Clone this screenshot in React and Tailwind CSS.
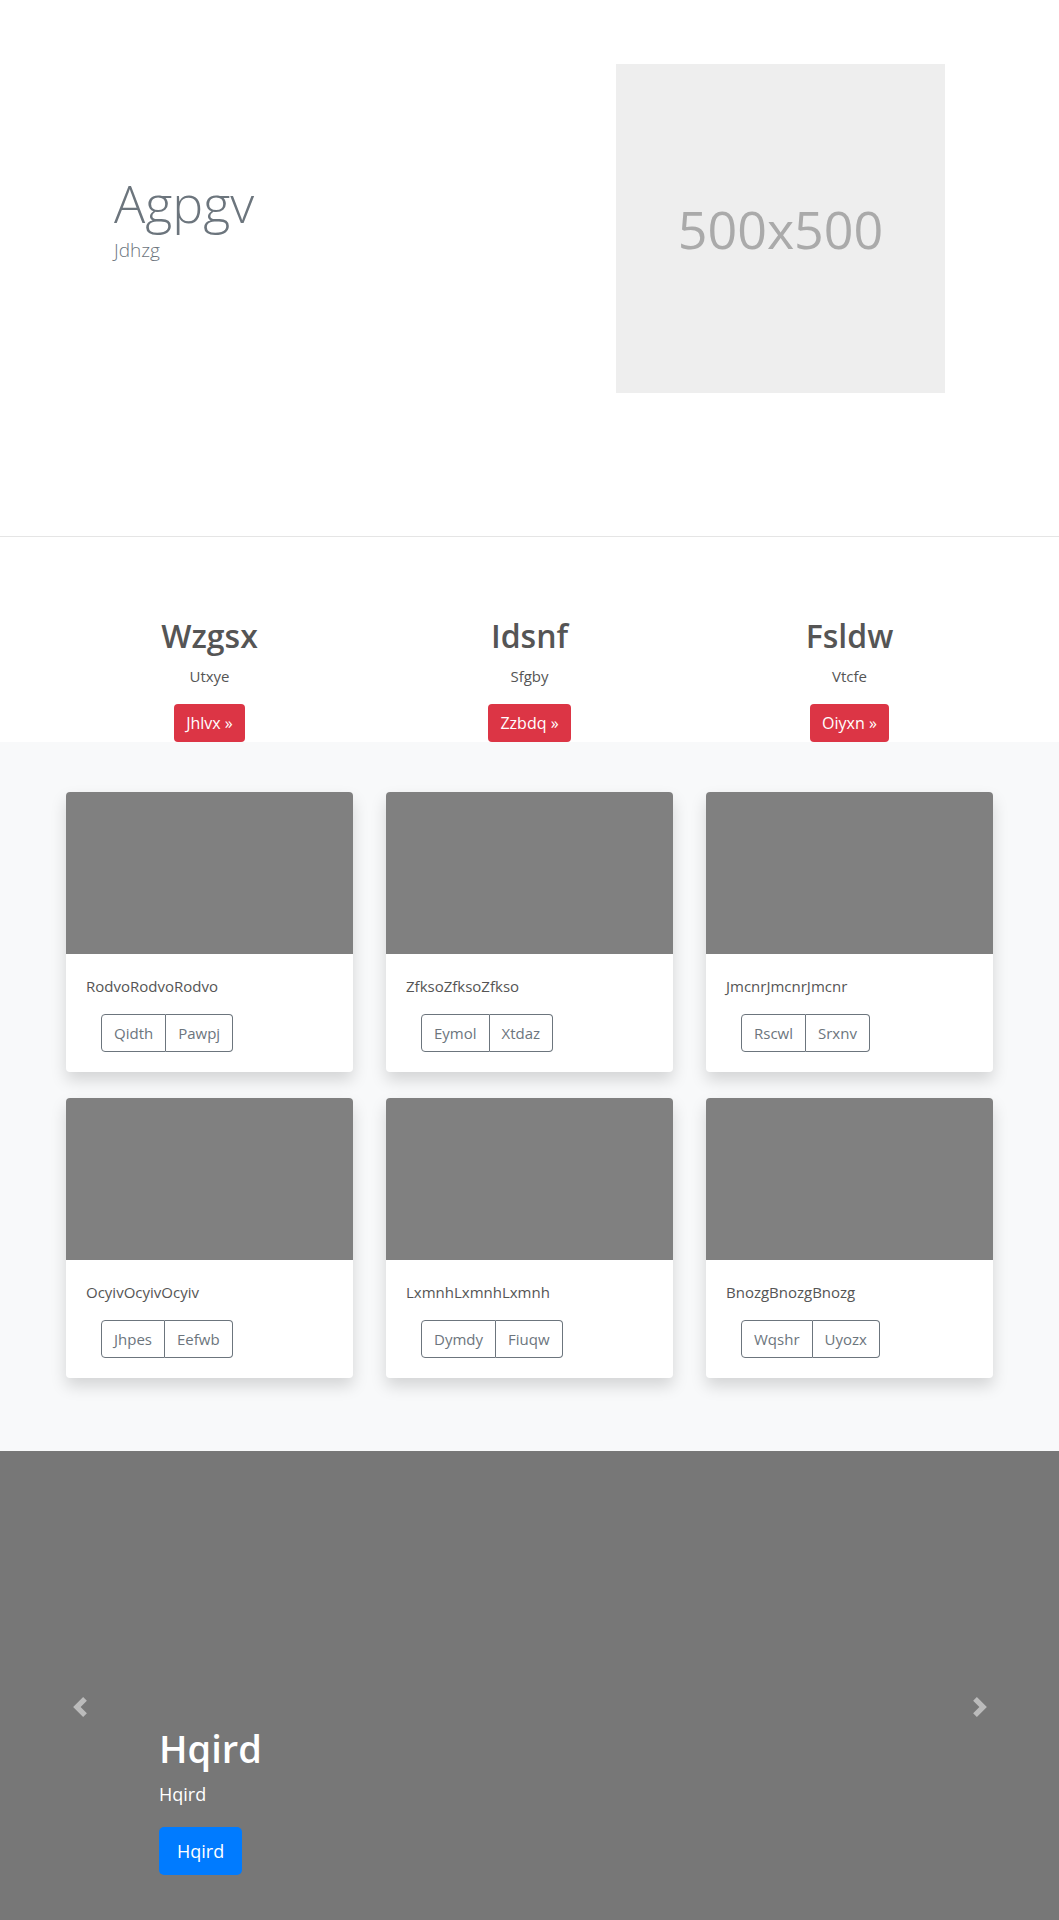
import React from "react";

const features = [
  { t: "Wzgsx", s: "Utxye", b: "Jhlvx" },
  { t: "Idsnf", s: "Sfgby", b: "Zzbdq" },
  { t: "Fsldw", s: "Vtcfe", b: "Oiyxn" },
];

const cards = [
  { t: "RodvoRodvoRodvo", a: "Qidth", b: "Pawpj" },
  { t: "ZfksoZfksoZfkso", a: "Eymol", b: "Xtdaz" },
  { t: "JmcnrJmcnrJmcnr", a: "Rscwl", b: "Srxnv" },
  { t: "OcyivOcyivOcyiv", a: "Jhpes", b: "Eefwb" },
  { t: "LxmnhLxmnhLxmnh", a: "Dymdy", b: "Fiuqw" },
  { t: "BnozgBnozgBnozg", a: "Wqshr", b: "Uyozx" },
];

function Card({ t, a, b }) {
  return (
    <div className="bg-white rounded-[4px] shadow-[0_8px_16px_rgba(0,0,0,0.15)] overflow-hidden">
      <div className="h-[162px] bg-[#808080]" />
      <div className="p-[20px]">
        <p className="text-[15px] leading-[24px] text-[#555] mb-[16px]">{t}</p>
        <div className="ml-[15px] inline-flex">
          <button className="h-[38px] px-[12px] text-[15px] leading-[24px] text-[#6c757d] border border-[#6c757d] rounded-l-[4px]">
            {a}
          </button>
          <button className="h-[38px] px-[12px] text-[15px] leading-[24px] text-[#6c757d] border border-[#6c757d] border-l-0 rounded-r-[4px]">
            {b}
          </button>
        </div>
      </div>
    </div>
  );
}

export default function App() {
  return (
    <div className="font-['Open_Sans','Noto_Sans',sans-serif] bg-white">
      {/* Hero */}
      <section className="h-[537px] border-b border-[#e5e5e5] pt-[64px] flex">
        <div className="w-[616px] pl-[114px]">
          <div className="mt-[109px]">
            <h1 className="text-[52px] leading-[60px] font-light text-[#6c757d]">Agpgv</h1>
            <p className="mt-[3px] text-[19px] leading-[28px] font-light text-[#6c757d]">Jdhzg</p>
          </div>
        </div>
        <div className="w-[329px] h-[329px] bg-[#eeeeee] flex items-center justify-center">
          <span className="text-[52px] text-[#aaaaaa] leading-none">500x500</span>
        </div>
      </section>

      {/* Features */}
      <section className="pt-[79px]">
        <div className="w-[960px] mx-auto grid grid-cols-3">
          {features.map((f) => (
            <div key={f.t} className="flex flex-col items-center">
              <h2 className="text-[32px] leading-[40px] font-semibold text-[#555]">{f.t}</h2>
              <p className="mt-[8px] text-[15px] leading-[24px] text-[#555]">{f.s}</p>
              <button className="mt-[16px] h-[38px] px-[12px] rounded-[4px] bg-[#dc3545] text-white text-[16px] leading-[24px]">
                {f.b} »
              </button>
            </div>
          ))}
        </div>
      </section>

      {/* Cards */}
      <section className="bg-[#f8f9fa] pt-[50px] pb-[73px]">
        <div className="w-[927px] mx-auto grid grid-cols-3 gap-x-[33px] gap-y-[26px]">
          {cards.map((c) => (
            <Card key={c.t} {...c} />
          ))}
        </div>
      </section>

      {/* Carousel */}
      <section className="relative h-[512px] bg-[#777777] flex flex-col justify-end pl-[159px] pb-[88px]">
        <a className="absolute left-0 top-0 h-full w-[159px] flex items-center justify-center opacity-50">
          <svg width="20" height="20" viewBox="0 0 8 8" fill="#fff">
            <path d="M5.25 0l-4 4 4 4 1.5-1.5L4.25 4l2.5-2.5L5.25 0z" />
          </svg>
        </a>
        <a className="absolute right-0 top-0 h-full w-[159px] flex items-center justify-center opacity-50">
          <svg width="20" height="20" viewBox="0 0 8 8" fill="#fff">
            <path d="M2.75 0l-1.5 1.5L3.75 4l-2.5 2.5L2.75 8l4-4-4-4z" />
          </svg>
        </a>
        <h1 className="text-[38px] leading-[46px] font-semibold text-white">Hqird</h1>
        <p className="mt-[10px] text-[18px] leading-[27px] text-white">Hqird</p>
        <div className="mt-[19px]">
          <button className="h-[48px] px-[18px] rounded-[5px] bg-[#007bff] text-white text-[18px] leading-[27px]">
            Hqird
          </button>
        </div>
      </section>
    </div>
  );
}
